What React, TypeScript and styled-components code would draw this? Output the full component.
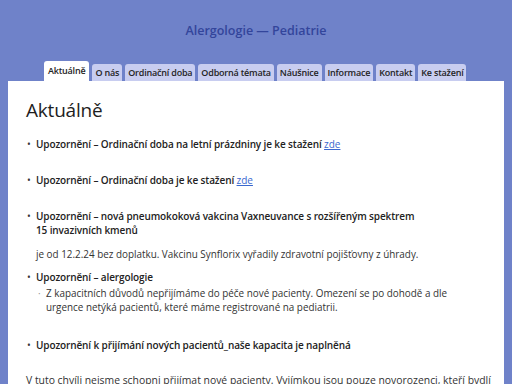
import styled, { createGlobalStyle } from 'styled-components'

const GlobalStyle = createGlobalStyle`
  html, body {
    margin: 0;
    padding: 0;
    height: 100%;
    overflow: hidden;
    background: #6f82c9;
  }
  body {
    font-family: 'Open Sans', 'Noto Sans', sans-serif;
    color: #2b2b2b;
  }
`

const Page = styled.div`
  padding: 0 8px;
`

const SiteTitle = styled.h1`
  margin: 0;
  padding-top: 22px;
  height: 40px;
  text-align: center;
  font-size: 12.5px;
  font-weight: 600;
  color: #33459b;
`

const Tabs = styled.nav`
  display: flex;
  align-items: flex-end;
  gap: 3px;
  padding-left: 36px;
  height: 19px;
`

const Tab = styled.a<{ $active?: boolean }>`
  display: block;
  height: ${({ $active }) => ($active ? '20px' : '17px')};
  line-height: ${({ $active }) => ($active ? '20px' : '18px')};
  padding: ${({ $active }) => ($active ? '0 4px' : '0 3px')};
  font-size: 9px;
  font-weight: 600;
  letter-spacing: -0.2px;
  color: #242424;
  background: ${({ $active }) => ($active ? '#ffffff' : '#c8cdf0')};
  border-radius: 3px 3px 0 0;
`

const Panel = styled.main`
  background: #ffffff;
  padding: 16px 18px 0;
  height: 320px;
`

const Heading = styled.h2`
  margin: 0 0 14px;
  font-size: 19px;
  font-weight: 400;
  line-height: 26px;
  color: #1e1e1e;
  letter-spacing: -0.2px;
`

const List = styled.ul`
  margin: 0;
  padding: 0 0 0 10px;
  list-style: none;
`

const Item = styled.li<{ $gap?: number }>`
  position: relative;
  margin-bottom: ${({ $gap }) => $gap ?? 22}px;
  font-size: 10px;
  line-height: 14px;

  &::before {
    content: '•';
    position: absolute;
    left: -9px;
    top: 0;
    color: #333;
  }
`

const Strong = styled.span`
  font-weight: 600;
  color: #222;
  letter-spacing: -0.12px;
`

const Link = styled.a`
  color: #3a68cf;
  text-decoration: underline;
`

const Note = styled.p`
  margin: 10px 0 0;
  font-size: 9.9px;
  line-height: 14px;
  color: #333;
`

const SubList = styled.ul`
  margin: 2px 0 0;
  padding: 0 0 0 10px;
  list-style: none;
`

const SubItem = styled.li`
  position: relative;
  font-size: 9.9px;
  line-height: 14px;
  color: #333;

  &::before {
    content: '·';
    position: absolute;
    left: -8px;
    color: #999;
  }
`

const Lead = styled.p`
  margin: 0;
  font-size: 10.4px;
  line-height: 14px;
  color: #333;
  white-space: nowrap;
`

export default function App() {
  return (
    <Page>
      <GlobalStyle />
      <SiteTitle>Alergologie — Pediatrie</SiteTitle>
      <Tabs>
        <Tab $active>Aktuálně</Tab>
        <Tab>O nás</Tab>
        <Tab>Ordinační doba</Tab>
        <Tab>Odborná témata</Tab>
        <Tab>Náušnice</Tab>
        <Tab>Informace</Tab>
        <Tab>Kontakt</Tab>
        <Tab>Ke stažení</Tab>
      </Tabs>
      <Panel>
        <Heading>Aktuálně</Heading>
        <List>
          <Item>
            <Strong>Upozornění – Ordinační doba na letní prázdniny je ke stažení </Strong>
            <Link>zde</Link>
          </Item>
          <Item>
            <Strong>Upozornění – Ordinační doba je ke stažení </Strong>
            <Link>zde</Link>
          </Item>
          <Item $gap={9}>
            <Strong>
              Upozornění – nová pneumokoková vakcina Vaxneuvance s rozšířeným spektrem
              <br />
              15 invazivních kmenů
            </Strong>
            <Note>
              je od 12.2.24 bez doplatku. Vakcinu Synflorix vyřadily zdravotní pojišťovny z úhrady.
            </Note>
          </Item>
          <Item $gap={24}>
            <Strong>Upozornění – alergologie</Strong>
            <SubList>
              <SubItem>
                Z kapacitních důvodů nepřijímáme do péče nové pacienty. Omezení se po dohodě a dle
                <br />
                urgence netýká pacientů, které máme registrované na pediatrii.
              </SubItem>
            </SubList>
          </Item>
          <Item $gap={21}>
            <Strong>Upozornění k přijímání nových pacientů_naše kapacita je naplněná</Strong>
          </Item>
        </List>
        <Lead>
          V tuto chvíli nejsme schopni přijímat nové pacienty. Vyjímkou jsou pouze novorozenci, kteří bydlí
        </Lead>
      </Panel>
    </Page>
  )
}
